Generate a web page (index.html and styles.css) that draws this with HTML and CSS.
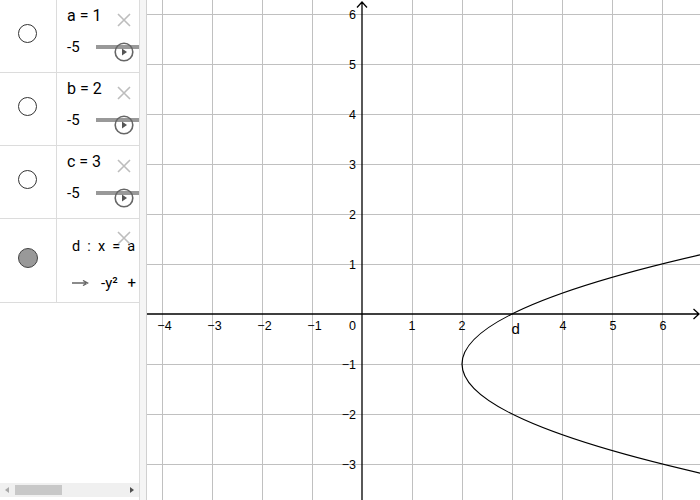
FILE: index.html
```html
<!DOCTYPE html>
<html>
<head>
<meta charset="utf-8">
<link rel="stylesheet" href="styles.css">
</head>
<body>
<div class="app">
  <div class="algebra">
    <div class="row">
      <div class="marble-cell"><span class="marble"></span></div>
      <div class="content">
        <div class="def">a = 1</div>
        <div class="slider"><span class="min">-5</span><span class="track"></span></div>
        <svg class="close" viewBox="0 0 14 14"><path d="M1 1L13 13M13 1L1 13"/></svg>
        <svg class="play" viewBox="0 0 20 20"><circle cx="10" cy="10" r="8.8"/><path d="M8 6.5L13 10L8 13.5Z"/></svg>
      </div>
    </div>
    <div class="row">
      <div class="marble-cell"><span class="marble"></span></div>
      <div class="content">
        <div class="def">b = 2</div>
        <div class="slider"><span class="min">-5</span><span class="track"></span></div>
        <svg class="close" viewBox="0 0 14 14"><path d="M1 1L13 13M13 1L1 13"/></svg>
        <svg class="play" viewBox="0 0 20 20"><circle cx="10" cy="10" r="8.8"/><path d="M8 6.5L13 10L8 13.5Z"/></svg>
      </div>
    </div>
    <div class="row">
      <div class="marble-cell"><span class="marble"></span></div>
      <div class="content">
        <div class="def">c = 3</div>
        <div class="slider"><span class="min">-5</span><span class="track"></span></div>
        <svg class="close" viewBox="0 0 14 14"><path d="M1 1L13 13M13 1L1 13"/></svg>
        <svg class="play" viewBox="0 0 20 20"><circle cx="10" cy="10" r="8.8"/><path d="M8 6.5L13 10L8 13.5Z"/></svg>
      </div>
    </div>
    <div class="row row-d">
      <div class="marble-cell"><span class="marble filled"></span></div>
      <div class="content">
        <div class="def small">d : x = a y² + b y + c</div>
        <div class="output"><svg class="arrow" viewBox="0 0 18 6"><path d="M0 3H14M11 0.5L15.5 3L11 5.5"/></svg><span>-y² + 2y + 3</span></div>
        <svg class="close close-d" viewBox="0 0 14 14"><path d="M1 1L13 13M13 1L1 13"/></svg>
      </div>
    </div>
    <div class="spacer"></div>
    <div class="scrollbar">
      <span class="sb-left"></span>
      <span class="thumb"></span>
      <span class="sb-right"></span>
    </div>
  </div>
  <div class="splitter"></div>
  <div class="graphics">
    <svg class="plot" width="553" height="500" viewBox="0 0 553 500">
      <g class="grid">
        <path d="M15 0V500M65 0V500M115 0V500M165 0V500M265 0V500M315 0V500M365 0V500M415 0V500M465 0V500M515 0V500"/>
        <path d="M0 14H553M0 64H553M0 114H553M0 164H553M0 214H553M0 264H553M0 364H553M0 414H553M0 464H553"/>
      </g>
      <g class="axes">
        <path d="M0 314H552M546.5 309L552 314L546.5 319"/>
        <path d="M215 500V2M210 7.5L215 2L220 7.5"/>
      </g>
      <g class="labels">
        <text x="17.5" y="330">−4</text>
        <text x="67.5" y="330">−3</text>
        <text x="117.5" y="330">−2</text>
        <text x="167.5" y="330">−1</text>
        <text x="265" y="330">1</text>
        <text x="315" y="330">2</text>
        <text x="416" y="330">4</text>
        <text x="466" y="330">5</text>
        <text x="516" y="330">6</text>
      </g>
      <g class="labels end">
        <text x="209" y="330">0</text>
        <text x="209" y="18.5">6</text>
        <text x="209" y="68.5">5</text>
        <text x="209" y="118.5">4</text>
        <text x="209" y="168.5">3</text>
        <text x="209" y="218.5">2</text>
        <text x="209" y="268.5">1</text>
        <text x="209" y="368.5">−1</text>
        <text x="209" y="418.5">−2</text>
        <text x="209" y="468.5">−3</text>
      </g>
      <path class="curve" d="M557 474Q73 364 557 254"/>
      <text class="curve-label" x="364.5" y="334">d</text>
    </svg>
  </div>
</div>
</body>
</html>
```

FILE: styles.css
```css
* { box-sizing: border-box; }
html, body { margin: 0; padding: 0; background: #fff; }
.app {
  display: flex;
  width: 700px;
  height: 500px;
  overflow: hidden;
  font-family: Roboto, "Liberation Sans", sans-serif;
  color: #000;
}
.algebra {
  width: 140px;
  flex: none;
  border-right: 1px solid #dcdcdc;
  display: flex;
  flex-direction: column;
  overflow: hidden;
}
.row {
  display: flex;
  height: 73px;
  flex: none;
  border-bottom: 1px solid #dcdcdc;
}
.row-d { height: 84px; }
.marble-cell {
  width: 57px;
  flex: none;
  border-right: 1px solid #dcdcdc;
  padding: 24px 0 0 18px;
}
.row-d .marble-cell { padding-top: 29px; }
.marble {
  display: block;
  width: 19px;
  height: 19px;
  border-radius: 50%;
  border: 1px solid #333;
  background: #fff;
}
.marble.filled {
  width: 20px;
  height: 20px;
  background: #999;
  border-color: #444;
}
.content {
  position: relative;
  flex: 1;
  overflow: hidden;
  padding: 6px 0 0 10px;
  white-space: nowrap;
}
.def {
  font-size: 16px;
  line-height: 20px;
  height: 20px;
}
.def.small {
  font-size: 14.5px;
  margin-top: 12px;
  padding-left: 5px;
  word-spacing: 3.5px;
}
.slider {
  display: flex;
  align-items: center;
  height: 20px;
  margin-top: 11px;
}
.min {
  font-size: 15px;
  line-height: 20px;
}
.track {
  flex: none;
  width: 80px;
  height: 4px;
  margin-left: 16px;
  background: #999;
}
.output {
  display: flex;
  align-items: center;
  height: 20px;
  margin-top: 16px;
  font-size: 15px;
  line-height: 20px;
  word-spacing: 6px;
}
.arrow {
  width: 18px;
  height: 6px;
  margin: 0 11px 0 5px;
  flex: none;
}
.arrow path { fill: none; stroke: #666; stroke-width: 1.4; }
.close {
  position: absolute;
  left: 60px;
  top: 13px;
  width: 14px;
  height: 14px;
}
.close-d { top: 12px; }
.close path { fill: none; stroke: #bdbdbd; stroke-width: 1.6; }
.play {
  position: absolute;
  left: 57px;
  top: 42px;
  width: 20px;
  height: 20px;
}
.play circle { fill: none; stroke: #666; stroke-width: 1.6; }
.play path { fill: #555; }
.spacer { flex: 1; }
.scrollbar {
  flex: none;
  height: 14px;
  margin-bottom: 3px;
  background: #f0f0f0;
  display: flex;
  align-items: center;
  position: relative;
}
.thumb {
  position: absolute;
  left: 15px;
  top: 2px;
  width: 47px;
  height: 10px;
  background: #c8c8c8;
}
.sb-left {
  position: absolute;
  left: 5px;
  top: 3.5px;
  width: 0; height: 0;
  border-top: 3.5px solid transparent;
  border-bottom: 3.5px solid transparent;
  border-right: 4px solid #a8a8a8;
}
.sb-right {
  position: absolute;
  left: 130px;
  top: 3.5px;
  width: 0; height: 0;
  border-top: 3.5px solid transparent;
  border-bottom: 3.5px solid transparent;
  border-left: 4px solid #505050;
}
.splitter {
  width: 7px;
  flex: none;
  background: #f5f5f5;
  border-right: 1px solid #d0d0d0;
}
.graphics {
  flex: 1;
  overflow: hidden;
}
.plot { display: block; }
.grid path { fill: none; stroke: #c0c0c0; stroke-width: 1; shape-rendering: crispEdges; }
.axes path { fill: none; stroke: #000; stroke-width: 1.3; }
.labels text {
  font-family: "Liberation Sans", Arial, sans-serif;
  font-size: 12.5px;
  fill: #000;
  text-anchor: middle;
}
.labels.end text { text-anchor: end; }
.curve { fill: none; stroke: #000; stroke-width: 1.2; }
.curve-label {
  font-family: "Liberation Sans", Arial, sans-serif;
  font-size: 15px;
  fill: #000;
}
```
